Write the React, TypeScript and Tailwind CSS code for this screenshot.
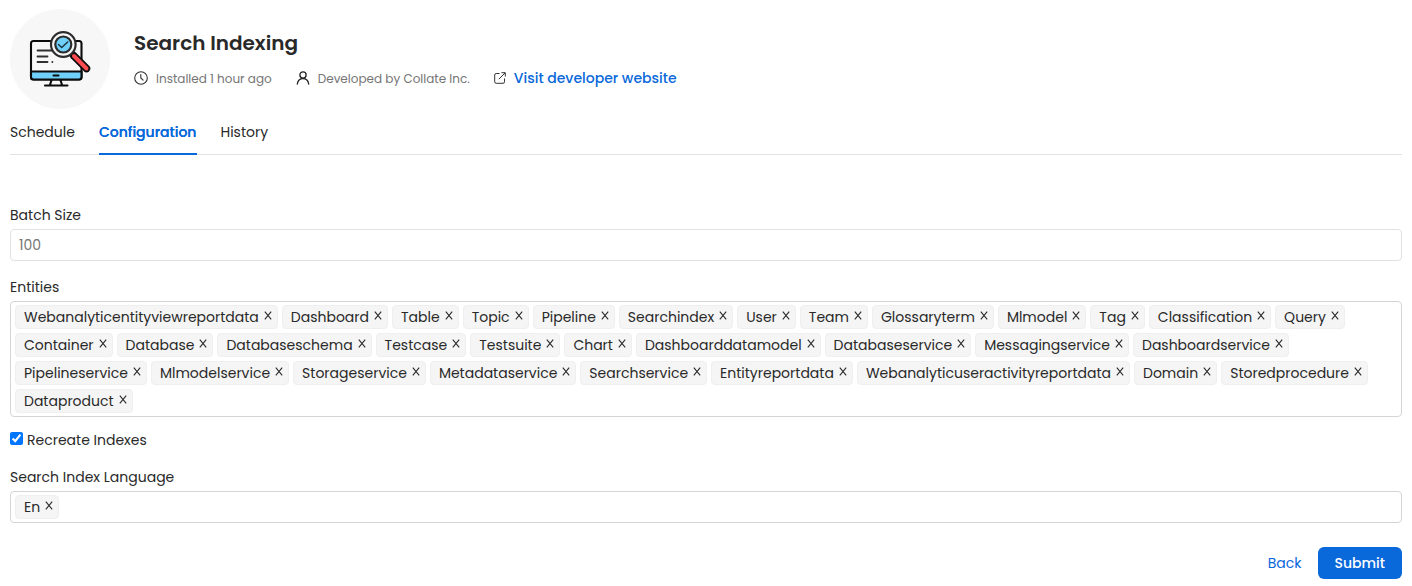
const entities = [
  'Webanalyticentityviewreportdata',
  'Dashboard',
  'Table',
  'Topic',
  'Pipeline',
  'Searchindex',
  'User',
  'Team',
  'Glossaryterm',
  'Mlmodel',
  'Tag',
  'Classification',
  'Query',
  'Container',
  'Database',
  'Databaseschema',
  'Testcase',
  'Testsuite',
  'Chart',
  'Dashboarddatamodel',
  'Databaseservice',
  'Messagingservice',
  'Dashboardservice',
  'Pipelineservice',
  'Mlmodelservice',
  'Storageservice',
  'Metadataservice',
  'Searchservice',
  'Entityreportdata',
  'Webanalyticuseractivityreportdata',
  'Domain',
  'Storedprocedure',
  'Dataproduct',
];

function Tag({ label }: { label: string }) {
  return (
    <span className="flex h-6 shrink-0 items-center rounded border border-[#efefef] bg-[#f5f5f5] pr-[5px] pl-2 leading-[22px]">
      {label}
      <svg viewBox="0 0 8 9" className="mb-[3px] ml-[5px] h-[9px] w-2 shrink-0" fill="none" stroke="#2b2b2b" strokeWidth="1.1">
        <path d="M.8.7 7.2 8.300M7.200.7.8 8.300" />
      </svg>
    </span>
  );
}

function AppLogo() {
  return (
    <svg viewBox="0 0 80 70" className="h-[70px] w-20" fill="none" stroke="#0b0b0b" strokeWidth="2.1" strokeLinecap="round" strokeLinejoin="round">
      <rect x="11" y="19" width="50.5" height="38.5" rx="2.500" fill="#f7f7f7" />
      <path d="M11 49.500h50.500V55a2.500 2.500 0 0 1-2.500 2.500h-45.500a2.500 2.500 0 0 1-2.500-2.500z" fill="#6fd0fa" />
      <path d="M33.500 53.600h5" strokeWidth="2" />
      <path d="M31.500 58l-1.500 5M40.500 58l1.500 5M25 63.500h22.500" />
      <path d="M17.500 28.500h14M17.500 34.500h10M17.500 40h10M32.300 40h.1" stroke="#303030" strokeWidth="1.800" />
      <path d="M53.500 33.500l13 13" stroke="#0b0b0b" strokeWidth="7.500" />
      <path d="M54 34l12.500 12.500" stroke="#fb4a50" strokeWidth="4" />
      <circle cx="43.300" cy="22.500" r="12.300" fill="#f7f7f7" stroke="#2c2c2c" strokeWidth="2.200" />
      <circle cx="43.300" cy="22.500" r="8" fill="#6fd0fa" stroke="#2c2c2c" strokeWidth="2.200" />
      <path d="M38.500 22.500l3.200 3 6-5.500" stroke="#1d3440" strokeWidth="1.500" />
    </svg>
  );
}

export default function App() {
  return (
    <main className="flex h-[586px] w-[1412px] flex-col overflow-hidden bg-white px-2.5 font-['Poppins','Inter',sans-serif] text-sm text-[#292929]">
      <header className="mt-[9px] flex h-[100px]">
        <div className="flex size-[100px] shrink-0 items-center justify-center rounded-full bg-[#f7f7f7] pb-[4px]">
          <AppLogo />
        </div>
        <div className="ml-6 flex flex-col pt-5">
          <h1 className="text-xl leading-7 font-semibold">Search Indexing</h1>
          <div className="mt-[11px] flex h-5 items-center">
            <svg viewBox="0 0 14 14" className="size-3.5" fill="none" stroke="#303030" strokeWidth="1.1" strokeLinecap="round">
              <circle cx="7" cy="7" r="6.300" />
              <path d="M6.800 3.500V7l2.300 2.200" />
            </svg>
            <span className="mt-0.5 ml-2 text-xs text-[#757575]">Installed 1 hour ago</span>
            <svg viewBox="0 0 14 14" className="ml-6 size-3.5" fill="none" stroke="#222" strokeWidth="1.300" strokeLinecap="round">
              <circle cx="7" cy="4" r="3.100" />
              <path d="M1.300 13c.5-3.300 2.500-5.300 5.700-5.300s5.200 2 5.700 5.300" />
            </svg>
            <span className="mt-0.5 ml-2 text-xs text-[#757575]">Developed by Collate Inc.</span>
            <svg viewBox="0 0 12 12" className="ml-6 size-3" fill="none" stroke="#333" strokeWidth="1">
              <path d="M5.500 1.500H2.200A1.500 1.500 0 0 0 .7 3v6.800a1.500 1.500 0 0 0 1.500 1.500H9a1.500 1.500 0 0 0 1.500-1.500V6.500M7.500.7h3.800v3.800M11 1 4.800 7.200" />
            </svg>
            <a href="#developer" className="ml-2 font-medium text-[#0968da]">
              Visit developer website
            </a>
          </div>
        </div>
      </header>

      <nav className="flex h-[46px] items-end gap-6 border-b border-[#e3e3e3]">
        <span className="h-8">Schedule</span>
        <span className="-mr-[0.6px] -mb-px h-[33px] border-b-2 border-[#0968da] pr-[0.6px] font-medium text-[#0968da] [text-shadow:0_0_0.25px_currentColor]">
          Configuration
        </span>
        <span className="h-8">History</span>
      </nav>

      <form className="flex flex-col" onSubmit={(e) => e.preventDefault()}>
        <label className="mt-[50px] h-6 leading-5">Batch Size</label>
        <input
          type="text"
          placeholder="100"
          className="h-8 rounded border border-[#e2e2e2] px-2 placeholder:text-[#757575]"
        />

        <label className="mt-4 h-6 leading-5">Entities</label>
        <div className="flex h-[116px] flex-wrap content-start gap-1 rounded border border-[#d5d5d5] px-1 py-[3px]">
          {entities.map((label) => (
            <Tag key={label} label={label} />
          ))}
        </div>

        <label className="mt-[13px] flex h-5 items-center">
          <input type="checkbox" defaultChecked className="mr-1 mb-[3px] size-[13px] accent-[#0075ff]" />
          Recreate Indexes
        </label>

        <label className="mt-[17px] h-6 leading-5">Search Index Language</label>
        <div className="flex h-8 rounded border border-[#d5d5d5] px-1 py-[3px]">
          <Tag label="En" />
        </div>

        <div className="mt-6 flex h-8 items-center justify-end gap-4">
          <button type="button" className="text-[#0968da]">
            Back
          </button>
          <button type="submit" className="flex h-8 items-center justify-center rounded-md bg-[#0968da] px-[17px] font-medium text-white">
            Submit
          </button>
        </div>
      </form>
    </main>
  );
}
